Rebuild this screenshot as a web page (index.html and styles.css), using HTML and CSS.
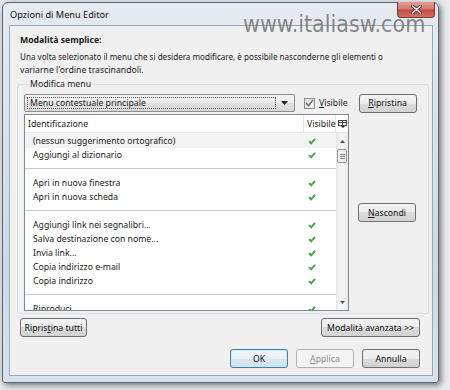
FILE: index.html
```html
<!DOCTYPE html>
<html lang="it">
<head>
  <meta charset="UTF-8" />
  <title>Opzioni di Menu Editor</title>
  <link rel="stylesheet" href="styles.css">
</head>
<body>
  <div class="desk">
    <div class="window">
      <div class="titlebar">
        <span class="title">Opzioni di Menu Editor</span>
        <span class="watermark">www.italiasw.com</span>
        <button class="close" aria-label="Chiudi">
          <svg width="11" height="9" viewBox="0 0 11 9"><path d="M1.5 1 L9.5 8 M9.5 1 L1.5 8" stroke="#4a1a14" stroke-width="3" stroke-linecap="round"/><path d="M1.5 1 L9.5 8 M9.5 1 L1.5 8" stroke="#fff" stroke-width="1.6" stroke-linecap="round"/></svg>
        </button>
      </div>

      <div class="client">
        <div class="intro-title">Modalità semplice:</div>
        <p class="intro"><span class="intro-long">Una volta selezionato il menu che si desidera modificare, è possibile nasconderne gli elementi o</span><br>variarne l'ordine trascinandoli.</p>

        <fieldset class="group">
          <legend>Modifica menu</legend>

          <div class="group-top">
            <div class="combo">
              <span class="combo-text">Menu contestuale principale</span>
              <span class="combo-arrow"><svg width="7" height="4" viewBox="0 0 7 4"><path d="M0 0 H7 L3.5 4 Z" fill="#222"/></svg></span>
            </div>
            <label class="check">
              <span class="check-box"><svg width="9" height="8" viewBox="0 0 9 8"><path d="M1 4 L3.5 6.5 L8 1" fill="none" stroke="#6a6f7a" stroke-width="1.6"/></svg></span>
              <span><u>V</u>isibile</span>
            </label>
            <button class="btn side-btn"><u>R</u>ipristina</button>
          </div>

          <div class="group-main">
            <div class="tree">
              <div class="tree-head">
                <span class="col-name">Identificazione</span>
                <span class="col-vis">Visibile</span>
                <span class="col-pick"><svg width="9" height="8" viewBox="0 0 9 8"><rect x="0.5" y="0.5" width="8" height="5" fill="#fff" stroke="#444"/><path d="M0.5 2.5 H8.5 M4.5 0.5 V5.5" stroke="#444"/><path d="M3 6 H7 L5 8 Z" fill="#222"/></svg></span>
              </div>
              <div class="tree-body">
                <div class="rows">
                  <div class="row hover"><span class="name">(nessun suggerimento ortografico)</span><span class="vis"><svg class="tick" viewBox="0 0 8 7"><path d="M0.3 3.8 L1.9 2.4 L3.2 3.8 L6.4 0.3 L7.8 1.6 L3.2 6.7 Z"/></svg></span></div>
                  <div class="row"><span class="name">Aggiungi al dizionario</span><span class="vis"><svg class="tick" viewBox="0 0 8 7"><path d="M0.3 3.8 L1.9 2.4 L3.2 3.8 L6.4 0.3 L7.8 1.6 L3.2 6.7 Z"/></svg></span></div>
                  <div class="sep"></div>
                  <div class="row"><span class="name">Apri in nuova finestra</span><span class="vis"><svg class="tick" viewBox="0 0 8 7"><path d="M0.3 3.8 L1.9 2.4 L3.2 3.8 L6.4 0.3 L7.8 1.6 L3.2 6.7 Z"/></svg></span></div>
                  <div class="row"><span class="name">Apri in nuova scheda</span><span class="vis"><svg class="tick" viewBox="0 0 8 7"><path d="M0.3 3.8 L1.9 2.4 L3.2 3.8 L6.4 0.3 L7.8 1.6 L3.2 6.7 Z"/></svg></span></div>
                  <div class="sep"></div>
                  <div class="row"><span class="name">Aggiungi link nei segnalibri...</span><span class="vis"><svg class="tick" viewBox="0 0 8 7"><path d="M0.3 3.8 L1.9 2.4 L3.2 3.8 L6.4 0.3 L7.8 1.6 L3.2 6.7 Z"/></svg></span></div>
                  <div class="row"><span class="name">Salva destinazione con nome...</span><span class="vis"><svg class="tick" viewBox="0 0 8 7"><path d="M0.3 3.8 L1.9 2.4 L3.2 3.8 L6.4 0.3 L7.8 1.6 L3.2 6.7 Z"/></svg></span></div>
                  <div class="row"><span class="name">Invia link...</span><span class="vis"><svg class="tick" viewBox="0 0 8 7"><path d="M0.3 3.8 L1.9 2.4 L3.2 3.8 L6.4 0.3 L7.8 1.6 L3.2 6.7 Z"/></svg></span></div>
                  <div class="row"><span class="name">Copia indirizzo e-mail</span><span class="vis"><svg class="tick" viewBox="0 0 8 7"><path d="M0.3 3.8 L1.9 2.4 L3.2 3.8 L6.4 0.3 L7.8 1.6 L3.2 6.7 Z"/></svg></span></div>
                  <div class="row"><span class="name">Copia indirizzo</span><span class="vis"><svg class="tick" viewBox="0 0 8 7"><path d="M0.3 3.8 L1.9 2.4 L3.2 3.8 L6.4 0.3 L7.8 1.6 L3.2 6.7 Z"/></svg></span></div>
                  <div class="sep"></div>
                  <div class="row"><span class="name">Riproduci</span><span class="vis"><svg class="tick" viewBox="0 0 8 7"><path d="M0.3 3.8 L1.9 2.4 L3.2 3.8 L6.4 0.3 L7.8 1.6 L3.2 6.7 Z"/></svg></span></div>
                </div>
                <div class="scrollbar">
                  <span class="sb-btn"><svg width="5" height="3" viewBox="0 0 5 3"><path d="M0 3 L2.5 0 L5 3 Z" fill="#555"/></svg></span>
                  <div class="sb-track">
                    <div class="sb-thumb"><span></span><span></span><span></span></div>
                  </div>
                  <span class="sb-btn"><svg width="5" height="3" viewBox="0 0 5 3"><path d="M0 0 L5 0 L2.5 3 Z" fill="#555"/></svg></span>
                </div>
              </div>
            </div>
            <div class="side">
              <button class="btn side-btn"><u>N</u>ascondi</button>
            </div>
          </div>
        </fieldset>

        <div class="row-buttons">
          <button class="btn reset-btn">Ripris<u>t</u>ina tutti</button>
          <button class="btn adv-btn">Modalità avanzata &gt;&gt;</button>
        </div>

        <div class="dialog-buttons">
          <button class="btn dlg-btn default">OK</button>
          <button class="btn dlg-btn" disabled><u>A</u>pplica</button>
          <button class="btn dlg-btn">Annulla</button>
        </div>
      </div>
    </div>
  </div>
</body>
</html>
```

FILE: styles.css
```css
* {
  box-sizing: border-box;
}

body {
  margin: 0;
  width: 450px;
  height: 390px;
  overflow: hidden;
  background: #e9ecef;
  font-family: "Noto Sans", "Open Sans", sans-serif;
  font-size: 8.7px;
  color: #1b1b1b;
}

.desk {
  padding: 2px 0 0 2px;
}

.window {
  position: relative;
  width: 437px;
  height: 381px;
  display: flex;
  flex-direction: column;
  border: 1px solid #5b6676;
  border-radius: 6px 6px 3px 3px;
  background: linear-gradient(to bottom, #e6ebf1, #d5dfea 45%, #cbd9e8 70%, #d8e2ec);
  box-shadow: 2px 2px 6px rgba(0, 0, 0, 0.55);
}

/* title bar */

.titlebar {
  position: relative;
  height: 22px;
  display: flex;
  align-items: center;
  padding-left: 7px;
}

.title {
  font-size: 9.2px;
  color: #101010;
}

.watermark {
  position: absolute;
  left: 240px;
  top: 7px;
  font-family: "DejaVu Sans Condensed", "DejaVu Sans", sans-serif;
  font-size: 23px;
  line-height: 28px;
  color: rgba(100, 100, 100, 0.75);
  white-space: nowrap;
}

.close {
  margin-left: auto;
  margin-right: 3px;
  align-self: flex-start;
  margin-top: -1px;
  width: 38px;
  height: 16px;
  padding: 0;
  display: flex;
  align-items: center;
  justify-content: center;
  border: 1px solid #7b3b34;
  border-top: none;
  border-radius: 0 0 4px 4px;
  background: linear-gradient(to bottom, #e3a295, #d3796a 45%, #c24c3d 55%, #cf7463);
}

/* client area */

.client {
  flex: 1;
  margin: 0 5px 6px 6px;
  padding: 7px 4px 0 7px;
  border: 1px solid #9aa9ba;
  background: #f0f0f0;
  display: flex;
  flex-direction: column;
}

.intro-title {
  padding-left: 3px;
  line-height: 14px;
  font-weight: bold;
}

.intro {
  margin: 3px 0 0;
  padding-left: 3px;
  line-height: 13px;
}

.intro-long {
  font-size: 8.1px;
}

/* group box */

.group {
  margin: 0;
  padding: 3px 11px 2px 6px;
  border: 1px solid #d5dfe5;
  border-radius: 3px;
}

.group legend {
  padding: 0 2px;
  margin-left: 4px;
  line-height: 14px;
  color: #222;
}

.group-top {
  display: flex;
  align-items: center;
  height: 18px;
  margin-bottom: 2px;
}

.combo {
  width: 271px;
  height: 18px;
  display: flex;
  align-items: center;
  padding: 2px;
  border: 1px solid #8c8c8c;
  border-radius: 2px;
  background: linear-gradient(to bottom, #f4f4f4, #ececec 50%, #e0e0e0 50%, #d9d9d9);
}

.combo-text {
  flex: 1;
  height: 12px;
  line-height: 11px;
  padding-left: 2px;
  border: 1px dotted #555;
}

.combo-arrow {
  width: 16px;
  display: flex;
  justify-content: center;
}

.check {
  display: flex;
  align-items: center;
  gap: 4px;
  margin-left: 9px;
  margin-right: 11px;
}

.check-box {
  width: 11px;
  height: 11px;
  display: flex;
  align-items: center;
  justify-content: center;
  border: 1px solid #8f8f8f;
  background: linear-gradient(135deg, #dcdcdc, #f6f6f6);
}

.group-main {
  display: flex;
  gap: 9px;
}

/* tree */

.tree {
  width: 325px;
  height: 197px;
  display: flex;
  flex-direction: column;
  border: 1px solid #828790;
  background: #fff;
}

.tree-head {
  display: flex;
  align-items: center;
  height: 18px;
  border-bottom: 1px solid #e3e3e3;
}

.col-name {
  flex: 1;
  padding-left: 3px;
}

.col-vis {
  width: 33px;
  height: 100%;
  display: flex;
  align-items: center;
  padding-left: 3px;
  border-left: 1px solid #e5e5e5;
  border-right: 1px solid #e5e5e5;
}

.col-pick {
  width: 12px;
  display: flex;
  justify-content: center;
}

.tree-body {
  flex: 1;
  display: flex;
  overflow: hidden;
}

.rows {
  flex: 1;
  padding-top: 1px;
  overflow: hidden;
}

.row {
  height: 14px;
  display: flex;
  align-items: center;
  color: #222;
}

.row.hover {
  background: #f4f4f4;
}

.row .name {
  flex: 1;
  padding-left: 8px;
  white-space: nowrap;
}

.row .vis {
  width: 33px;
  padding-left: 5px;
  display: flex;
}

.tick {
  width: 8px;
  height: 7px;
  fill: #47a54d;
}

.sep {
  height: 14px;
  padding-top: 6px;
}

.sep::before {
  content: "";
  display: block;
  border-top: 1px solid #c8c8c8;
}

.scrollbar {
  width: 12px;
  display: flex;
  flex-direction: column;
  background: linear-gradient(to right, #e6e6e6, #f4f4f4 30%, #f4f4f4 70%, #e8e8e8);
}

.sb-btn {
  height: 16px;
  display: flex;
  align-items: center;
  justify-content: center;
}

.sb-track {
  flex: 1;
}

.sb-thumb {
  margin: 0 1px;
  height: 14px;
  display: flex;
  flex-direction: column;
  align-items: center;
  justify-content: center;
  gap: 1px;
  border: 1px solid #9a9a9a;
  border-radius: 2px;
  background: linear-gradient(to right, #f6f6f6, #e4e4e4);
}

.sb-thumb span {
  width: 5px;
  height: 1px;
  background: #8a8a8a;
}

.side {
  display: flex;
  align-items: center;
}

/* buttons */

.btn {
  height: 19px;
  padding: 0;
  font-family: inherit;
  font-size: 8.7px;
  color: #111;
  border: 1px solid #707070;
  border-radius: 3px;
  background: linear-gradient(to bottom, #f3f3f3, #ebebeb 50%, #dddddd 50%, #d1d1d1);
}

.side-btn {
  width: 58px;
}

.row-buttons {
  display: flex;
  justify-content: space-between;
  margin-top: 4px;
  padding: 0 8px 0 3px;
}

.reset-btn {
  width: 67px;
}

.adv-btn {
  width: 99px;
}

.dialog-buttons {
  display: flex;
  justify-content: flex-end;
  gap: 8px;
  margin-top: 12px;
  padding-right: 8px;
}

.dlg-btn {
  width: 58px;
}

.dlg-btn.default {
  border-color: #3c7fb1;
  box-shadow: inset 0 0 0 1px #cbe9fa;
  background: linear-gradient(to bottom, #f2f7fb, #e7f0f7 50%, #dce8f1 50%, #d2e1ec);
}

.dlg-btn:disabled {
  color: #8d8d8d;
  border-color: #adb2b5;
  background: #f4f4f4;
}
```
